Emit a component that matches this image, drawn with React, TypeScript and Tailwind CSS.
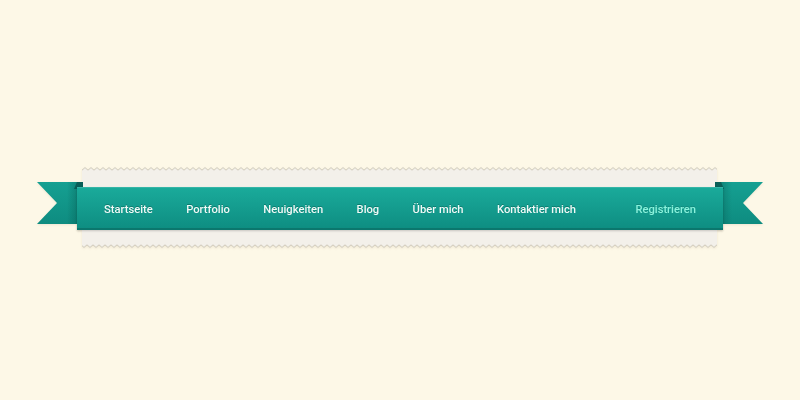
import React from 'react';

const links = ['Startseite', 'Portfolio', 'Neuigkeiten', 'Blog', 'Über mich', 'Kontaktier mich'];

// serrated paper edge, drawn as a repeating zigzag
function PaperEdge({ id, bottom = false }: { id: string; bottom?: boolean }) {
  return (
    <svg className={`block h-[4px] w-full ${bottom ? 'rotate-180' : ''}`} preserveAspectRatio="none">
      <defs>
        <pattern id={id} width="6" height="4" patternUnits="userSpaceOnUse">
          <path d="M0 4 L0 3.2 L3 0.6 L6 3.2 L6 4 Z" fill="#f3f0ea" />
          <path d="M0 3.2 L3 0.6 L6 3.2" fill="none" stroke="#c9c4b6" strokeWidth="0.9" />
        </pattern>
      </defs>
      <rect width="100%" height="4" fill={`url(#${id})`} />
    </svg>
  );
}

function Tail({ side }: { side: 'left' | 'right' }) {
  const left = side === 'left';
  const points = left ? '0,0 46,0 46,42 0,42 20,21' : '0,0 48,0 28,21 48,42 0,42';
  return (
    <svg
      width={left ? 46 : 48}
      height={42}
      className={`absolute top-[15px] ${left ? 'left-[-45px]' : 'left-[633px]'}`}
    >
      <defs>
        <linearGradient id={`tail-v-${side}`} x1="0" y1="0" x2="0" y2="1">
          <stop offset="0" stopColor="#15a092" />
          <stop offset="1" stopColor="#0e8c80" />
        </linearGradient>
        <linearGradient id={`tail-s-${side}`} x1={left ? '1' : '0'} y1="0" x2={left ? '0' : '1'} y2="0">
          <stop offset="0" stopColor="#04463f" stopOpacity="0.45" />
          <stop offset="0.35" stopColor="#04463f" stopOpacity="0" />
        </linearGradient>
      </defs>
      <polygon points={points} fill={`url(#tail-v-${side})`} />
      <polygon points={points} fill={`url(#tail-s-${side})`} />
      {/* fold where the tail tucks behind the band */}
      {left ? (
        <polygon points="40,0 46,0 46,7 37,7" fill="#0a5f58" />
      ) : (
        <polygon points="0,0 6,0 9,7 0,7" fill="#0a5f58" />
      )}
    </svg>
  );
}

export default function App() {
  return (
    <div className="h-[400px] w-full bg-[#fdf8e7] pt-[167px] font-['Roboto','Liberation_Sans',sans-serif]">
      <div className="relative ml-[82px] flex w-[635px] flex-col drop-shadow-[0_1px_1px_rgba(120,100,60,0.12)]">
        <Tail side="left" />
        <Tail side="right" />
        <PaperEdge id="edge-top" />
        <div className="flex flex-col bg-[#f3f0ea] pt-[16px] pb-[14px]">
          <nav className="relative z-10 -ml-[5px] -mr-[6px] flex h-[43px] items-center gap-[33.4px] border-b-2 border-[#0b776d] bg-gradient-to-b from-[#1aab9b] to-[#0e8e82] px-[27px] pt-[5px] shadow-[inset_0_1px_0_rgba(255,255,255,0.12),0_1px_2px_rgba(0,0,0,0.18)]">
            {links.map((label) => (
              <a
                key={label}
                href="#"
                className="text-[11.2px] font-medium text-[#f0fbf8] [text-shadow:0_-1px_0_rgba(0,60,50,0.35)]"
              >
                {label}
              </a>
            ))}
            <a
              href="#"
              className="ml-auto text-[11.2px] font-medium text-[#8af2dc] [text-shadow:0_-1px_0_rgba(0,60,50,0.2)]"
            >
              Registrieren
            </a>
          </nav>
        </div>
        <PaperEdge id="edge-bottom" bottom />
      </div>
    </div>
  );
}
